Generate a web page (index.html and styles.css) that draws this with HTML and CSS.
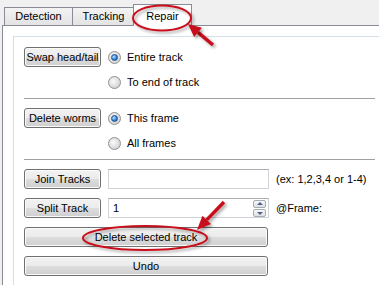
FILE: index.html
```html
<!DOCTYPE html>
<html lang="en">
<head>
  <meta charset="UTF-8" />
  <meta name="viewport" content="width=device-width, initial-scale=1.0"/>
  <title>Repair</title>
  <link rel="stylesheet" href="styles.css">
</head>
<body>
  <div class="tabs">
    <div class="tab tab_detection">Detection</div>
    <div class="tab tab_tracking">Tracking</div>
    <div class="tab tab_repair active">Repair</div>
  </div>

  <div class="panel">
    <div class="group">
      <div class="section">
        <button class="btn">Swap head/tail</button>
        <div class="options">
          <label class="option"><span class="radio checked"></span>Entire track</label>
          <label class="option"><span class="radio"></span>To end of track</label>
        </div>
      </div>

      <hr class="sep">

      <div class="section">
        <button class="btn">Delete worms</button>
        <div class="options">
          <label class="option"><span class="radio checked"></span>This frame</label>
          <label class="option"><span class="radio"></span>All frames</label>
        </div>
      </div>

      <hr class="sep">

      <div class="rows">
        <div class="row">
          <button class="btn">Join Tracks</button>
          <div class="field"></div>
          <span class="hint">(ex: 1,2,3,4 or 1-4)</span>
        </div>
        <div class="row">
          <button class="btn">Split Track</button>
          <div class="field">1
            <span class="spin">
              <span class="spin_up"></span>
              <span class="spin_down"></span>
            </span>
          </div>
          <span class="hint">@Frame:</span>
        </div>
        <button class="btn btn_wide">Delete selected track</button>
        <button class="btn btn_wide">Undo</button>
      </div>
    </div>
  </div>

  <!-- red annotations drawn over the screenshot -->
  <svg class="marks" width="379" height="285" viewBox="0 0 379 285">
    <defs>
      <filter id="sombra" x="-20%" y="-20%" width="150%" height="160%">
        <feDropShadow dx="2" dy="2" stdDeviation="1.5" flood-color="#000" flood-opacity="0.35"/>
      </filter>
    </defs>
    <g filter="url(#sombra)" stroke="#c8101a" fill="none">
      <ellipse cx="162" cy="18" rx="29" ry="12.5" stroke-width="2"/>
      <line x1="213" y1="45" x2="198" y2="32.4" stroke-width="3.5"/>
      <ellipse cx="145" cy="238" rx="62" ry="12" stroke-width="2"/>
      <line x1="224" y1="202" x2="206.7" y2="219.9" stroke-width="3.5"/>
    </g>
    <g filter="url(#sombra)" fill="#c8101a">
      <polygon points="188,24 201.9,27.8 194.1,37"/>
      <polygon points="197,230 211,224.1 202.4,215.7"/>
    </g>
  </svg>
</body>
</html>
```

FILE: styles.css
```css
body {
  margin: 0;
  background: #f0f0f0;
  font-family: "Liberation Sans", Arial, sans-serif;
  font-size: 11px;
  color: #000;
  overflow: hidden;
}
.tabs {
  display: flex;
  align-items: flex-end;
  height: 25px;
  padding-left: 4px;
}
.tab {
  box-sizing: border-box;
  height: 18px;
  line-height: 17px;
  text-align: center;
  border: 1px solid #898c95;
  border-bottom: none;
  background: linear-gradient(#f3f3f3, #e3e3e3);
  position: relative;
}
.tab_detection {
  width: 69px;
}
.tab_tracking {
  width: 63px;
  margin-left: -1px;
}
.tab_repair {
  width: 59px;
  margin-left: -2px;
}
.tab.active {
  height: 22px;
  padding-top: 3px;
  margin-bottom: -1px;
  background: #fff;
  z-index: 1;
}
.panel {
  margin-left: 2px;
  height: 260px;
  background: #fff;
  border-top: 1px solid #898c95;
  border-left: 1px solid #898c95;
}
.group {
  margin: 10px 0 0 10px;
  height: 250px;
  padding: 10px 0 0 10px;
  border-top: 1px solid #d5dfe5;
  border-left: 1px solid #d5dfe5;
}
.section {
  display: flex;
  gap: 7px;
}
.options {
  display: flex;
  flex-direction: column;
  gap: 5px;
}
.option {
  display: flex;
  align-items: center;
  gap: 6px;
  height: 20px;
}
.radio {
  box-sizing: border-box;
  width: 13px;
  height: 13px;
  border-radius: 50%;
  border: 1px solid #8f8f8f;
  background: radial-gradient(circle at 40% 40%, #fafafa, #d6d6d6 70%, #c8c8c8);
  position: relative;
}
.radio.checked::after {
  content: "";
  position: absolute;
  left: 2px;
  top: 2px;
  width: 5px;
  height: 5px;
  border-radius: 50%;
  border: 1px solid #1c4f91;
  background: radial-gradient(circle at 35% 35%, #bfe3ff, #2f7fd6 60%, #174f9c);
}
.sep {
  width: 351px;
  margin: 6px 0 9px;
  border: none;
  border-top: 1px solid #a0a0a0;
}
.rows {
  display: flex;
  flex-direction: column;
  gap: 9px;
}
.row {
  display: flex;
  align-items: center;
  gap: 7px;
}
.btn {
  box-sizing: border-box;
  width: 77px;
  height: 20px;
  padding: 0;
  font-family: inherit;
  font-size: 11px;
  color: #000;
  border: 1px solid #707070;
  border-radius: 3px;
  background: linear-gradient(#f2f2f2 0%, #ebebeb 50%, #dddddd 51%, #cfcfcf 100%);
  box-shadow: inset 0 0 0 1px #fbfbfb;
}
.btn_wide {
  width: 244px;
}
.field {
  box-sizing: border-box;
  width: 161px;
  height: 20px;
  line-height: 18px;
  padding-left: 4px;
  border: 1px solid #d0d4d9;
  border-top-color: #abadb3;
  background: #fff;
  position: relative;
}
.spin {
  position: absolute;
  right: 2px;
  top: 1px;
  width: 13px;
  display: flex;
  flex-direction: column;
  gap: 1px;
}
.spin_up,
.spin_down {
  box-sizing: border-box;
  height: 8px;
  border: 1px solid #a5acb5;
  border-radius: 2px;
  background: linear-gradient(#f7f7f7, #dde0e4);
  position: relative;
}
.spin_up::after,
.spin_down::after {
  content: "";
  position: absolute;
  left: 3px;
  border-left: 3px solid transparent;
  border-right: 3px solid transparent;
}
.spin_up::after {
  top: 1px;
  border-bottom: 3px solid #4d6185;
}
.spin_down::after {
  top: 2px;
  border-top: 3px solid #4d6185;
}
.hint {
  white-space: nowrap;
}
.marks {
  position: absolute;
  left: 0;
  top: 0;
  z-index: 2;
  pointer-events: none;
}
```
